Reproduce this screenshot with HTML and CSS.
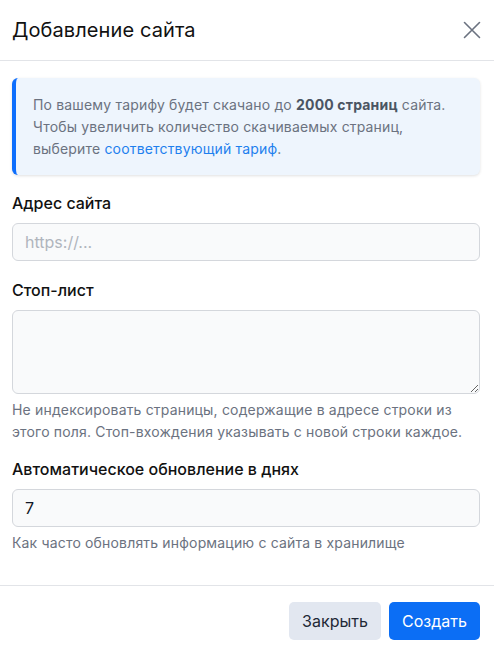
FILE: index.html
```html
<!DOCTYPE html>
<html lang="ru">
<head>
<meta charset="utf-8">
<link rel="stylesheet" href="styles.css">
</head>
<body>
<div class="modal">
  <div class="modal-header">
    <h1 class="modal-title">Добавление сайта</h1>
    <button class="close-btn" aria-label="Закрыть">
      <svg width="18" height="18" viewBox="0 0 18 18"><path d="M1.5 1.5L16.5 16.5M16.5 1.5L1.5 16.5" stroke="#6b7280" stroke-width="1.6" stroke-linecap="round" fill="none"/></svg>
    </button>
  </div>
  <div class="modal-body">
    <div class="alert">
      По вашему тарифу будет скачано до <b>2000 страниц</b> сайта. Чтобы увеличить количество скачиваемых страниц, выберите <a href="#" class="link">соответствующий тариф</a>.
    </div>
    <div class="field">
      <label class="label">Адрес сайта</label>
      <input class="input" type="text" placeholder="https://...">
    </div>
    <div class="field">
      <label class="label">Стоп-лист</label>
      <textarea class="input textarea"></textarea>
      <div class="help">Не индексировать страницы, содержащие в адресе строки из этого поля. Стоп-вхождения указывать с новой строки каждое.</div>
    </div>
    <div class="field last">
      <label class="label">Автоматическое обновление в днях</label>
      <input class="input" type="text" value="7">
      <div class="help">Как часто обновлять информацию с сайта в хранилище</div>
    </div>
  </div>
  <div class="modal-footer">
    <button class="btn btn-secondary">Закрыть</button>
    <button class="btn btn-primary">Создать</button>
  </div>
</div>
</body>
</html>
```
FILE: styles.css
```css
* { box-sizing: border-box; }
html, body { margin: 0; padding: 0; background: #fff; }
body {
  font-family: Inter, "Noto Sans", sans-serif;
  color: #111827;
  width: 494px;
}
.modal { width: 494px; }
.modal-header {
  height: 61px;
  padding: 0 13px 0 12px;
  display: flex;
  align-items: center;
  justify-content: space-between;
  border-bottom: 1px solid #e2e4e8;
}
.modal-title {
  margin: 0;
  font-size: 20px;
  font-weight: 400;
  line-height: 28px;
  letter-spacing: 0.1px;
  color: #111;
}
.close-btn {
  border: 0;
  background: none;
  padding: 0;
  width: 18px;
  height: 18px;
  display: flex;
  cursor: pointer;
}
.modal-body {
  padding: 17px 14px 31px 12px;
}
.alert {
  background: #eef5fd;
  border-left: 4px solid #0d6efd;
  border-radius: 6px;
  padding: 16px 16px 15px 17px;
  font-size: 14px;
  line-height: 22px;
  letter-spacing: 0.17px;
  color: #6b7280;
  box-shadow: 0 1px 3px rgba(0,0,0,0.12);
  margin-bottom: 16px;
}
.alert b { color: #4b5563; font-weight: 700; }
.link { color: #1e80ee; text-decoration: none; }
.field { display: flex; flex-direction: column; margin-bottom: 17px; }
.field.last { margin-bottom: 0; }
.field + .field.last { margin-top: -3px; }
.label {
  font-size: 16px;
  line-height: 24px;
  font-weight: 500;
  color: #111;
  margin-bottom: 8px;
}
.input {
  height: 38px;
  border: 1px solid #d4d7dc;
  border-radius: 6px;
  background: #f9fafb;
  font-family: Inter, "Noto Sans", sans-serif;
  font-size: 16px;
  color: #111827;
  padding: 0 12px;
  outline: none;
}
.input::placeholder { color: #b0b5bd; }
.textarea {
  height: 84px;
  resize: vertical;
  padding: 8px 12px;
}
.help {
  font-size: 14px;
  line-height: 22px;
  letter-spacing: 0.17px;
  color: #6b7280;
  margin-top: 5px;
}
.modal-footer {
  border-top: 1px solid #e2e4e8;
  padding: 16px 14px 13px 12px;
  display: flex;
  justify-content: flex-end;
  gap: 8px;
}
.btn {
  height: 38px;
  border: 0;
  border-radius: 5px;
  font-family: Inter, "Noto Sans", sans-serif;
  font-size: 16px;
  padding: 0 13px;
  cursor: pointer;
}
.btn-secondary { background: #e2e7f0; color: #1f2937; width: 92px; }
.btn-primary { background: #0b6ef5; color: #fff; width: 91px; }
```
